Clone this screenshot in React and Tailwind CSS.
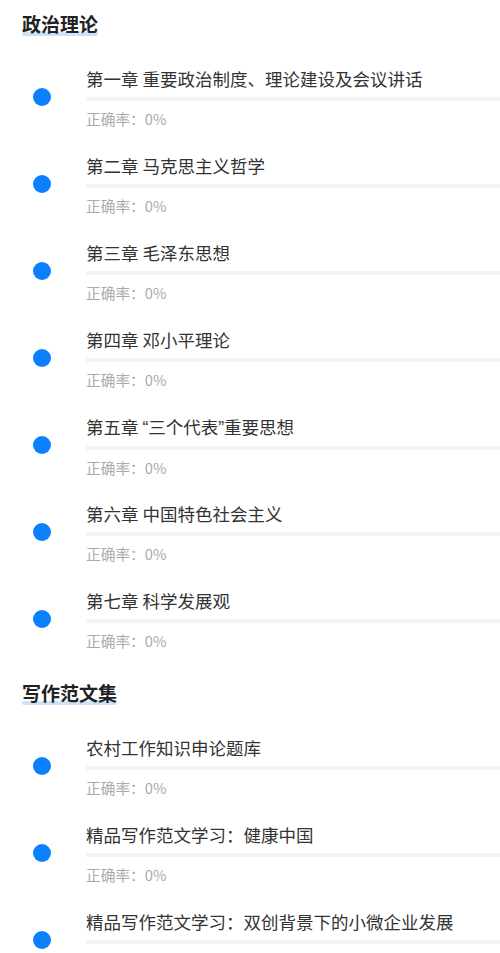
const sections = [
  {
    title: '政治理论',
    head: 'pt-[13px] pb-[21px]',
    items: [
      { name: '第一章 重要政治制度、理论建设及会议讲话', rate: '0%' },
      { name: '第二章 马克思主义哲学', rate: '0%' },
      { name: '第三章 毛泽东思想', rate: '0%' },
      { name: '第四章 邓小平理论', rate: '0%' },
      { name: ['第五章 ', '“', '三个代表', '”', '重要思想'], rate: '0%' },
      { name: '第六章 中国特色社会主义', rate: '0%' },
      { name: '第七章 科学发展观', rate: '0%' },
    ],
  },
  {
    title: '写作范文集',
    head: 'pt-[15px] pb-[21px]',
    items: [
      { name: '农村工作知识申论题库', rate: '0%' },
      { name: '精品写作范文学习：健康中国', rate: '0%' },
      { name: '精品写作范文学习：双创背景下的小微企业发展', rate: '0%' },
    ],
  },
]

function Name({ name }) {
  if (typeof name === 'string') return name
  return name.map((part, i) =>
    part === '“' || part === '”' ? (
      <span key={i} className="font-['Liberation_Sans',sans-serif]">{part}</span>
    ) : (
      <span key={i}>{part}</span>
    )
  )
}

export default function App() {
  return (
    <div className="w-[500px] h-[953px] overflow-hidden bg-white font-['Noto_Sans_CJK_SC',sans-serif]">
      {sections.map((s, si) => (
        <section key={si}>
          {/* Section heading with highlight */}
          <div className={`pl-[22px] ${s.head}`}>
            <h2 className="relative inline-block text-[19px] leading-[22px] font-bold text-[#222]">
              <span className="absolute left-0 right-0 bottom-[-1px] h-[4px] rounded-full bg-[#cce2fb]" />
              <span className="relative">{s.title}</span>
            </h2>
          </div>
          <ul>
            {s.items.map((it, i) => (
              <li key={i} className="flex items-start h-[87px]">
                <div className="w-[86px] shrink-0 flex pl-[33px] pt-[30px]">
                  <span className="w-[18px] h-[18px] rounded-full bg-[#0a80ff]" />
                </div>
                <div className="flex-1 pt-[9px]">
                  <p className="text-[17.5px] leading-[24px] text-[#333]">
                    <Name name={it.name} />
                  </p>
                  <div className="mt-[6px] h-[4px] bg-[#f3f3f3]" />
                  <p className="mt-[8px] text-[14.7px] leading-[20px] text-[#aaa]">正确率：{it.rate}</p>
                </div>
              </li>
            ))}
          </ul>
        </section>
      ))}
    </div>
  )
}
